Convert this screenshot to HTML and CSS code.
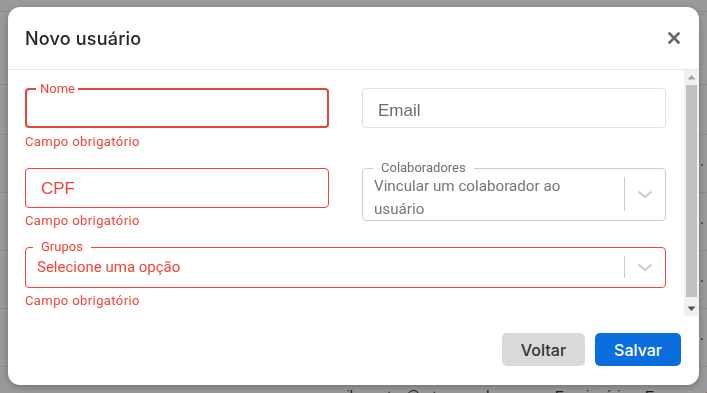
FILE: index.html
```html
<!DOCTYPE html>
<html lang="pt-BR">
<head>
    <meta charset="UTF-8">
    <meta name="viewport" content="width=device-width, initial-scale=1.0">
    <title>Novo usuário</title>
    <link rel="stylesheet" href="styles.css">
</head>
<body>

<div class="page">
    <div class="list-row row-top"></div>
    <div class="list-row row-head"></div>
    <div class="list-row row-sm"></div>
    <div class="list-row"><span class="cell-end">.</span></div>
    <div class="list-row"><span class="cell-end">.</span></div>
    <div class="list-row"><span class="cell-end">.</span></div>
    <div class="list-row"><span class="cell-end">.</span></div>
    <div class="list-row row-data">
        <span></span>
        <span>milu.santos@orton.com.br</span>
        <span>Funcionários</span>
        <span>Empresa Orton</span>
    </div>
</div>

<div class="overlay"></div>

<div class="modal">
    <div class="modal-header">
        <h2>Novo usuário</h2>
        <button class="close" aria-label="Fechar">
            <svg width="12" height="12" viewBox="0 0 12 12">
                <path d="M1.5 1.5 L10.5 10.5 M10.5 1.5 L1.5 10.5" stroke="#666" stroke-width="2.6" stroke-linecap="square"/>
            </svg>
        </button>
    </div>

    <div class="modal-main">
        <div class="modal-body">
            <div class="form-grid">
                <div class="field">
                    <fieldset class="outlined focused">
                        <legend>Nome</legend>
                        <div class="blank"></div>
                    </fieldset>
                    <div class="error">Campo obrigatório</div>
                </div>

                <div class="field">
                    <div class="text-input email">Email</div>
                </div>

                <div class="field">
                    <div class="text-input invalid">CPF</div>
                    <div class="error">Campo obrigatório</div>
                </div>

                <div class="field">
                    <fieldset class="select">
                        <legend>Colaboradores</legend>
                        <div class="select-value two-lines">Vincular um colaborador ao usuário</div>
                        <div class="indicators">
                            <span class="separator"></span>
                            <span class="chevron">
                                <svg width="20" height="20" viewBox="0 0 20 20">
                                    <path d="M3.5 7.5 L10 13 L16.5 7.5" fill="none" stroke="#ccc" stroke-width="2.2"/>
                                </svg>
                            </span>
                        </div>
                    </fieldset>
                </div>

                <div class="field wide">
                    <fieldset class="select invalid">
                        <legend>Grupos</legend>
                        <div class="select-value">Selecione uma opção</div>
                        <div class="indicators">
                            <span class="separator"></span>
                            <span class="chevron">
                                <svg width="20" height="20" viewBox="0 0 20 20">
                                    <path d="M3.5 7.5 L10 13 L16.5 7.5" fill="none" stroke="#ccc" stroke-width="2.2"/>
                                </svg>
                            </span>
                        </div>
                    </fieldset>
                    <div class="error">Campo obrigatório</div>
                </div>
            </div>
        </div>

        <div class="scrollbar">
            <span class="arrow">
                <svg width="15" height="15" viewBox="0 0 15 15"><path d="M3.5 9.5 L7.5 5 L11.5 9.5 Z" fill="#a3a3a3"/></svg>
            </span>
            <div class="track"><div class="thumb"></div></div>
            <span class="arrow">
                <svg width="15" height="15" viewBox="0 0 15 15"><path d="M3.5 5.5 L7.5 10 L11.5 5.5 Z" fill="#505050"/></svg>
            </span>
        </div>
    </div>

    <div class="modal-footer">
        <button class="btn btn-secondary">Voltar</button>
        <button class="btn btn-primary">Salvar</button>
    </div>
</div>

</body>
</html>
```

FILE: styles.css
```css
body {
    margin: 0;
    overflow: hidden;
    font-family: Roboto, "Liberation Sans", Arial, sans-serif;
    background-color: #fff;
}

/* page behind the dialog */
.page {
    width: 707px;
}
.list-row {
    height: 57px;
    border-bottom: 1px solid #e9e9e9;
    display: flex;
    align-items: center;
    white-space: nowrap;
    overflow: hidden;
    font-family: "Liberation Sans", Arial, sans-serif;
    font-size: 14px;
    color: #333;
}
.row-top {
    height: 11px;
}
.row-head {
    height: 72px;
}
.row-sm {
    height: 49px;
}
.cell-end {
    margin-left: auto;
    margin-right: 3px;
    padding-bottom: 6px;
}
.row-data {
    display: grid;
    grid-template-columns: 335px 220px 90px 1fr;
    align-items: start;
    padding-top: 21px;
    height: 36px;
}

.overlay {
    position: fixed;
    inset: 0;
    background-color: rgba(0, 0, 0, 0.4);
}

/* dialog */
.modal {
    position: absolute;
    left: 8px;
    top: 7px;
    width: 691px;
    height: 378px;
    display: flex;
    flex-direction: column;
    background-color: #fff;
    border-radius: 12px;
    overflow: hidden;
    box-shadow: 0 2px 6px rgba(0, 0, 0, 0.25);
}
.modal-header {
    height: 62px;
    flex-shrink: 0;
    display: flex;
    align-items: center;
    justify-content: space-between;
    padding: 0 19px 0 17px;
    border-bottom: 1px solid #e3e6ea;
}
.modal-header h2 {
    margin: 0;
    font-family: Inter, "Open Sans", sans-serif;
    font-size: 18px;
    font-weight: 500;
    letter-spacing: 0.2px;
    color: #212529;
}
.close {
    border: none;
    background: none;
    padding: 0;
    width: 12px;
    height: 12px;
    display: flex;
    cursor: pointer;
}

.modal-main {
    height: 246px;
    flex-shrink: 0;
    display: flex;
}
.modal-body {
    flex: 1;
    overflow: hidden;
    padding: 12px 18px 12px 17px;
}
.scrollbar {
    width: 15px;
    display: flex;
    flex-direction: column;
    background-color: #f1f1f1;
}
.arrow {
    height: 15px;
    display: flex;
}
.track {
    flex: 1;
    display: flex;
    flex-direction: column;
}
.thumb {
    height: 212px;
    margin: 0 2px;
    background-color: #c1c1c1;
}

.form-grid {
    display: grid;
    grid-template-columns: 304px 304px;
    column-gap: 33px;
    row-gap: 11px;
    align-items: start;
}
.field.wide {
    grid-column: 1 / 3;
}

fieldset {
    margin: 0;
    padding: 0;
    min-width: 0;
    border-radius: 4px;
}
legend {
    line-height: 14px;
}

.outlined.focused {
    border: 2px solid #e8453c;
}
.outlined legend {
    margin-left: 9px;
    padding: 0 3px 0 4px;
    font-size: 13px;
    color: #f44336;
}
.blank {
    height: 30px;
}

.text-input {
    height: 40px;
    box-sizing: border-box;
    margin-top: 6px;
    padding: 2px 0 0 15px;
    display: flex;
    align-items: center;
    border: 1px solid #dfe2e5;
    border-radius: 4px;
    font-family: "Liberation Sans", Arial, sans-serif;
    font-size: 17px;
    color: #6c6c6c;
}
.text-input.email {
    padding-top: 5px;
}
.text-input.invalid {
    margin-top: 7px;
    border-color: #f44336;
    color: #f44336;
}

.error {
    margin-top: 6px;
    font-size: 13px;
    line-height: 16px;
    letter-spacing: 0.4px;
    color: #f44336;
}
.text-input + .error,
.select + .error {
    margin-top: 5px;
}

.select {
    display: flex;
    align-items: stretch;
    border: 1px solid #cccccc;
}
.select legend {
    margin-left: 10px;
    padding: 0 8px;
    font-size: 13px;
    color: #6f6f6f;
}
.select.invalid {
    border-color: #f44336;
}
.select.invalid legend {
    margin-left: 7px;
    color: #f44336;
}
.select-value {
    flex: 1;
    padding: 0 8px 7px 11px;
    font-size: 15px;
    line-height: 26px;
    color: #f44336;
}
.select-value.two-lines {
    padding: 0 20px 0 11px;
    font-size: 15.2px;
    line-height: 22.5px;
    color: #757575;
}
.indicators {
    display: flex;
    align-items: stretch;
    padding: 2px 0 9px;
}
.separator {
    width: 1px;
    background-color: #cccccc;
}
.chevron {
    width: 40px;
    display: flex;
    align-items: center;
    justify-content: center;
}

.modal-footer {
    display: flex;
    justify-content: flex-end;
    gap: 10px;
    padding: 17px 18px 19px;
}
.btn {
    height: 33px;
    padding: 0 19px;
    border: none;
    border-radius: 5px;
    font-family: Inter, "Open Sans", sans-serif;
    font-size: 16px;
    font-weight: 500;
    cursor: pointer;
}
.btn-secondary {
    background-color: #d9d9d9;
    color: #333;
}
.btn-primary {
    background-color: #0b6ede;
    color: #fff;
}
```
